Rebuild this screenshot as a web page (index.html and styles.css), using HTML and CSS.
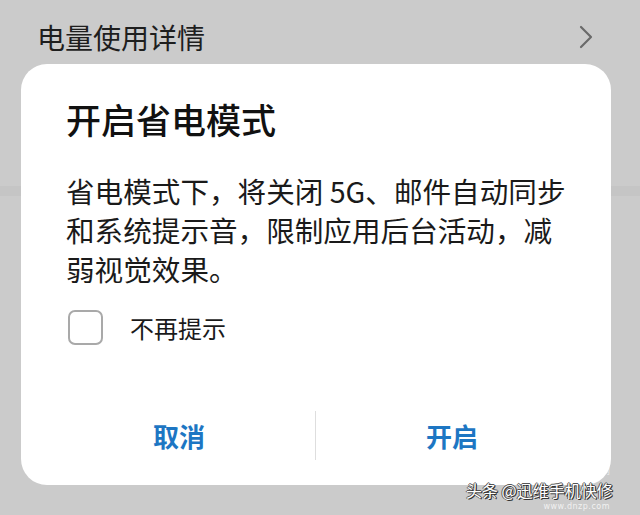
FILE: index.html
```html
<!DOCTYPE html>
<html lang="zh-CN">
<head>
<meta charset="utf-8">
<link rel="stylesheet" href="styles.css">
</head>
<body>
<div class="screen">
  <div class="header">
    <span class="header-title">电量使用详情</span>
    <svg class="chevron" width="14" height="24" viewBox="0 0 14 24"><path d="M2 2 L12 12 L2 22" fill="none" stroke="#6a6a6a" stroke-width="2.2" stroke-linejoin="round" stroke-linecap="round"/></svg>
  </div>
  <div class="band"></div>
  <div class="dialog">
    <div class="title">开启省电模式</div>
    <div class="desc">省电模式下，将关闭 5G、邮件自动同步<br>和系统提示音，限制应用后台活动，减<br>弱视觉效果。</div>
    <label class="check-row">
      <span class="checkbox"></span>
      <span class="check-label">不再提示</span>
    </label>
    <div class="actions">
      <span class="btn">取消</span>
      <span class="divider"></span>
      <span class="btn">开启</span>
    </div>
  </div>
  <div class="watermark">
    <span class="wm-site">电脑网</span>
    <span class="wm-main">头条 @迅维手机快修</span>
    <span class="wm-url">www.dnzp.com</span>
  </div>
</div>
</body>
</html>
```
FILE: styles.css
```css
html, body {
  margin: 0;
  padding: 0;
}
body {
  background: #cbcbcb;
  font-family: "Noto Sans CJK SC", "Noto Sans", sans-serif;
  width: 640px;
  height: 515px;
  overflow: hidden;
}
.screen {
  position: relative;
  width: 640px;
  height: 515px;
}
.header {
  height: 64px;
  display: flex;
  align-items: center;
  justify-content: space-between;
  padding: 10px 47px 0 37px;
  box-sizing: border-box;
}
.header-title {
  font-size: 28px;
  line-height: 40px;
  color: #1e1e1e;
}
.band {
  position: absolute;
  left: 0;
  right: 0;
  top: 186px;
  height: 10px;
  background: #c5c5c5;
}
.dialog {
  position: relative;
  margin: 0 29px 0 21px;
  background: #ffffff;
  border-radius: 26px;
  padding: 33px 0 25px;
}
.title {
  font-size: 35px;
  font-weight: 500;
  line-height: 44px;
  color: #111111;
  padding-left: 45px;
}
.desc {
  margin-top: 30px;
  font-size: 28.6px;
  line-height: 39px;
  color: #1a1a1a;
  padding-left: 45px;
}
.check-row {
  margin-top: 22px;
  display: flex;
  align-items: center;
  height: 35px;
  padding-left: 47px;
}
.checkbox {
  width: 31px;
  height: 31px;
  border: 2px solid #a9a9a9;
  border-radius: 7px;
  flex: none;
}
.check-label {
  margin-left: 27px;
  font-size: 24px;
  color: #1a1a1a;
  line-height: 35px;
}
.actions {
  margin-top: 65px;
  display: flex;
  align-items: center;
  height: 50px;
  padding: 0 23px 0 22px;
}
.btn {
  flex: 1;
  text-align: center;
  font-size: 26px;
  font-weight: 700;
  color: #1d76c3;
}
.divider {
  width: 1px;
  height: 49px;
  background: #dedede;
  flex: none;
}
.watermark {
  position: absolute;
  left: 466px;
  top: 464px;
  width: 170px;
  display: flex;
  flex-direction: column;
  align-items: flex-end;
  padding-right: 26px;
  box-sizing: border-box;
}
.wm-site {
  font-size: 9px;
  line-height: 14px;
  color: rgba(255,255,255,0.6);
}
.wm-main {
  align-self: flex-start;
  font-size: 16px;
  line-height: 24px;
  white-space: nowrap;
  color: #ffffff;
  text-shadow: 1px 1px 0 #333, -1px 0 0 #555, 0 -1px 0 #555, 1px 0 0 #333;
}
.wm-url {
  font-size: 8px;
  line-height: 10px;
  letter-spacing: 0.5px;
  color: rgba(255,255,255,0.75);
  font-family: "DejaVu Sans", sans-serif;
}
```
